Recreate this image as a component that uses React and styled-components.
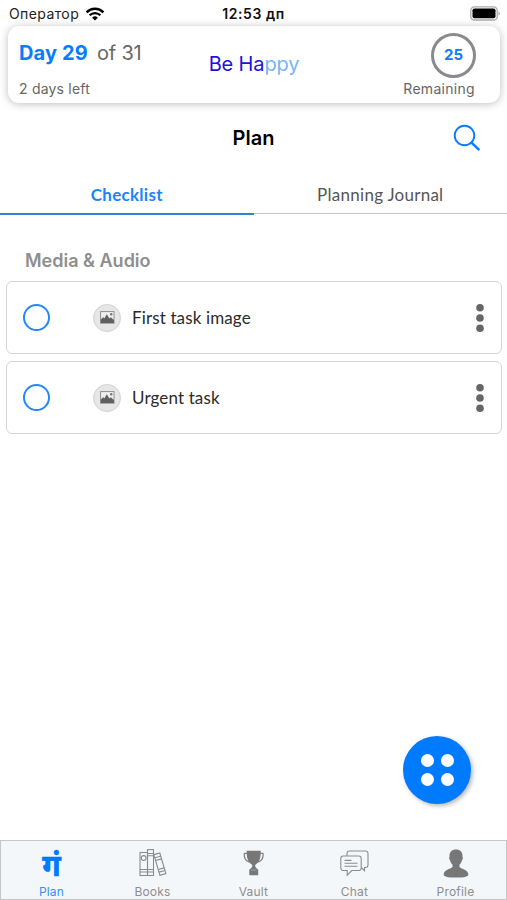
import React from "react";
import styled, { createGlobalStyle } from "styled-components";

const tasks = ["First task image", "Urgent task"];

function WifiIcon() {
  return (
    <svg width="20" height="14" viewBox="0 0 20 14" fill="none" stroke="#000">
      <path d="M1.6 5.3a12 12 0 0 1 16.8 0" strokeWidth="2.5" />
      <path d="M4.6 8.3a7.7 7.7 0 0 1 10.8 0" strokeWidth="2.3" />
      <path d="M10 13.6 7.1 10.7a4.1 4.1 0 0 1 5.8 0z" fill="#000" stroke="none" />
    </svg>
  );
}

function BatteryIcon() {
  return (
    <svg width="31" height="15" viewBox="0 0 31 15">
      <rect x="0.8" y="0.8" width="26.4" height="13.2" rx="3.6" fill="#fff" stroke="#aaa" strokeWidth="1.3" />
      <rect x="2.5" y="2.5" width="23" height="9.8" rx="1.8" fill="#000" />
      <path d="M28.5 5.2a2.6 2.6 0 0 1 0 4.6z" fill="#aaa" />
    </svg>
  );
}

function SearchIcon() {
  return (
    <svg width="28" height="28" viewBox="0 0 28 28" fill="none" stroke="#0a7cff" strokeLinecap="round">
      <circle cx="11.5" cy="11.5" r="9.8" strokeWidth="1.9" />
      <path d="M18.8 18.8 25.6 25.4" strokeWidth="2.5" />
    </svg>
  );
}

function PictureIcon() {
  return (
    <svg width="15" height="13" viewBox="0 0 15 13">
      <rect x="0.6" y="0.6" width="13.4" height="11.6" fill="#eee" stroke="#888" strokeWidth="0.9" />
      <path d="M0.8 12V8.400l2.400-2.200 1.300 1 2.300-3.900 2.600 4.200 1.300-1.200 3.200 2.600V12z" fill="#606060" />
      <circle cx="11.2" cy="3.300" r="1.200" fill="#777" />
    </svg>
  );
}

function DotsIcon() {
  return (
    <svg width="8" height="30" viewBox="0 0 8 30" fill="#666">
      <circle cx="4" cy="4.7" r="3.8" />
      <circle cx="4" cy="15" r="3.8" />
      <circle cx="4" cy="25.3" r="3.8" />
    </svg>
  );
}

function BooksIcon() {
  return (
    <svg width="28" height="28" viewBox="0 0 28 28" fill="none" stroke="#8c8c8c" strokeWidth="1.1">
      <rect x="1" y="3.5" width="7.5" height="23" />
      <circle cx="4.7" cy="9" r="2.4" />
      <path d="M1 20.5h7.5M1 23h7.5" />
      <rect x="8.5" y="0.6" width="6" height="25.9" />
      <path d="M8.5 4.5h6M8.5 6.7h6M8.5 20.5h6M8.5 23h6" />
      <path d="m14.9 5.6 5.9-1.6 6.1 20.6-6 1.7z" />
      <path d="m15.8 8.8 5.9-1.6M16.6 11.5l5.9-1.6M19.2 20.5l5.9-1.6M20 23.1l5.9-1.6" />
    </svg>
  );
}

function TrophyIcon() {
  return (
    <svg width="22" height="28" viewBox="0 0 22 28">
      <path
        d="M4 4.4H1.4c-.5 4 .9 7.4 5 8.8M17.2 4.4h2.8c.5 4-1 7.4-5.2 8.8"
        fill="none"
        stroke="#858585"
        strokeWidth="1.3"
      />
      <path
        d="M3.7 1.7h14v2.2c0 5-1.5 9.2-5 11.5-.8.6-.7 1.5-.3 2.3.6 1.2 1.6 2 2.8 2.7v5.9H6.3v-5.9c1.2-.7 2.2-1.5 2.8-2.7.4-.8.4-1.7-.4-2.3C5.2 13.1 3.7 8.9 3.7 3.900z"
        fill="#777"
      />
      <path d="M8 21h5.5" stroke="#aaa" strokeWidth="0.8" />
    </svg>
  );
}

function ChatIcon() {
  return (
    <svg width="29" height="27" viewBox="0 0 29 27" fill="none" stroke="#8c8c8c" strokeWidth="1.1">
      <path d="M7 6V3.5a2.5 2.5 0 0 1 2.5-2.5h16a2.5 2.5 0 0 1 2.5 2.5v11.500a2.5 2.5 0 0 1-2.5 2.5h-1v3.200l-3.300-3.200" />
      <path d="M3.2 6h15.600a2.400 2.400 0 0 1 2.400 2.400v9.700a2.400 2.400 0 0 1-2.400 2.400h-7l-4.600 4.600v-4.600h-4a2.400 2.400 0 0 1-2.400-2.400v-9.700A2.400 2.400 0 0 1 3.200 6z" />
      <path d="M4.500 10.400h7M4.500 13.300h13M4.500 16.200h13" />
    </svg>
  );
}

function ProfileIcon() {
  return (
    <svg width="26" height="29" viewBox="0 0 26 29" fill="#777">
      <path d="M13 .5c4.2 0 6.500 2.500 6.500 6.400 0 1.100.5 1.500.3 2.700-.2 1-.8 1.400-1 2.300-.4 1.500-1.300 2.700-2.300 3.700v2.300c1 1.700 8.300 2.600 8.800 7 .2 2.600-3.200 3.600-12.300 3.600S.5 27.500.7 24.900c.5-4.400 7.800-5.300 8.800-7v-2.300c-1-1-1.900-2.200-2.300-3.700-.2-.9-.8-1.300-1-2.300-.2-1.200.3-1.600.3-2.700C6.500 3 8.800.5 13 .5z" />
    </svg>
  );
}

function App() {
  return (
    <>
      <GlobalStyle />
      <Screen>
        <StatusBar>
          <Operator>
            <span>Оператор</span>
            <WifiIcon />
          </Operator>
          <Clock>12:53 дп</Clock>
          <BatteryIcon />
        </StatusBar>

        <DayCard>
          <DayInfo>
            <DayTitle>
              <strong>Day 29</strong>
              <span>of 31</span>
            </DayTitle>
            <Caption $spacing="0.2px">2 days left</Caption>
          </DayInfo>
          <Mood>
            Be Ha<span>ppy</span>
          </Mood>
          <Remaining>
            <Ring>25</Ring>
            <Caption $spacing="0.3px">Remaining</Caption>
          </Remaining>
        </DayCard>

        <Header>
          <h1>Plan</h1>
          <SearchButton aria-label="Search">
            <SearchIcon />
          </SearchButton>
        </Header>

        <Tabs>
          <Tab $active>Checklist</Tab>
          <Tab>Planning Journal</Tab>
        </Tabs>

        <Content>
          <SectionTitle>Media &amp; Audio</SectionTitle>
          {tasks.map((title) => (
            <TaskRow key={title}>
              <Check aria-label="Done" />
              <Thumb>
                <PictureIcon />
              </Thumb>
              <TaskTitle>{title}</TaskTitle>
              <DotsIcon />
            </TaskRow>
          ))}
        </Content>

        <Fab aria-label="Menu">
          <i />
          <i />
          <i />
          <i />
        </Fab>

        <TabBar>
          <TabItem $active>
            <TabIcon>
              <Logo>गं</Logo>
            </TabIcon>
            Plan
          </TabItem>
          <TabItem>
            <TabIcon>
              <BooksIcon />
            </TabIcon>
            Books
          </TabItem>
          <TabItem>
            <TabIcon>
              <TrophyIcon />
            </TabIcon>
            Vault
          </TabItem>
          <TabItem>
            <TabIcon>
              <ChatIcon />
            </TabIcon>
            Chat
          </TabItem>
          <TabItem>
            <TabIcon>
              <ProfileIcon />
            </TabIcon>
            Profile
          </TabItem>
        </TabBar>
      </Screen>
    </>
  );
}

export default App;

/* --------------- GLOBAL ---------------- */

const GlobalStyle = createGlobalStyle`
  * {
    box-sizing: border-box;
  }

  body {
    margin: 0;
    background: #fff;
    font-family: Inter, "Liberation Sans", sans-serif;
  }

  button {
    padding: 0;
    border: 0;
    background: none;
  }

  svg {
    display: block;
    flex: none;
  }
`;

const Screen = styled.div`
  position: relative;
  display: flex;
  flex-direction: column;
  width: 100%;
  height: 900px;
  overflow: hidden;
  white-space: nowrap;
`;

/* --------------- STATUS BAR ---------------- */

const StatusBar = styled.div`
  display: grid;
  grid-template-columns: 1fr auto 1fr;
  align-items: center;
  height: 26px;
  padding: 1px 6px 0 9px;
  font-size: 14px;
  line-height: 18px;

  > svg {
    justify-self: end;
  }
`;

const Operator = styled.div`
  display: flex;
  align-items: center;
  gap: 6px;
  letter-spacing: 0.4px;
  color: #222;
`;

const Clock = styled.div`
  margin-right: 3px;
  font-weight: 600;
  letter-spacing: 0.55px;
  color: #111;
`;

/* --------------- DAY CARD ---------------- */

const DayCard = styled.section`
  display: grid;
  grid-template-columns: 1fr auto 1fr;
  height: 77px;
  margin: 0 7px 0 8px;
  padding: 0 24px 0 11px;
  border-radius: 11px;
  background: #fff;
  box-shadow: 0 1px 9px rgba(0, 0, 0, 0.26);
`;

const DayInfo = styled.div`
  padding-top: 15px;
`;

const DayTitle = styled.div`
  display: flex;
  gap: 9px;
  height: 40px;
  font-size: 20px;
  line-height: 25px;
  color: #666;

  strong {
    font-weight: 700;
    letter-spacing: 0.15px;
    color: #0a7cff;
  }

  span {
    letter-spacing: -0.2px;
  }
`;

const Caption = styled.div`
  font-size: 14px;
  line-height: 16px;
  letter-spacing: ${(props) => props.$spacing};
  color: #666;
`;

const Mood = styled.div`
  padding: 26px 0 0 13px;
  font-size: 20px;
  line-height: 25px;
  letter-spacing: -0.15px;
  color: #2310e0;

  span {
    color: #78b4fa;
  }
`;

const Remaining = styled.div`
  display: flex;
  flex-direction: column;
  align-items: flex-end;
  padding: 7px 1px 0 0;
`;

const Ring = styled.div`
  display: flex;
  justify-content: center;
  align-items: center;
  width: 45px;
  height: 45px;
  margin: 0 -1px 3px 0;
  padding-bottom: 2px;
  border: 3px solid #8a8a8e;
  border-radius: 50%;
  font-size: 15px;
  font-weight: 700;
  color: #0a7cff;
`;

/* --------------- HEADER ---------------- */

const Header = styled.header`
  display: grid;
  grid-template-columns: 1fr auto 1fr;
  align-items: center;
  height: 70px;
  padding: 0 26px;

  h1 {
    grid-column: 2;
    margin: 0;
    font-size: 20px;
    font-weight: 600;
    line-height: 26px;
    color: #000;
  }
`;

const SearchButton = styled.button`
  justify-self: end;
`;

const Tabs = styled.nav`
  display: flex;
  height: 42px;
`;

const Tab = styled.div`
  flex: 1;
  height: ${(props) => (props.$active ? "42px" : "41px")};
  border-bottom: ${(props) => (props.$active ? "2px solid #2f82dc" : "1px solid #c4c4c4")};
  font-family: Lato, "Open Sans", sans-serif;
  font-size: 17px;
  font-weight: ${(props) => (props.$active ? 700 : 400)};
  line-height: 44px;
  letter-spacing: 0.27px;
  text-align: center;
  color: ${(props) => (props.$active ? "#1a84fa" : "#555")};
`;

/* --------------- TASKS ---------------- */

const Content = styled.main`
  flex: 1;
  padding: 0 5px 0 6px;
`;

const SectionTitle = styled.h2`
  height: 66px;
  margin: 0;
  padding: 34px 0 0 19px;
  font-size: 18px;
  font-weight: 600;
  line-height: 24px;
  color: #8e8e8e;
`;

const TaskRow = styled.div`
  display: flex;
  align-items: center;
  height: 73px;
  margin-bottom: 7px;
  padding: 0 17px 0 16px;
  border: 1px solid #d6d6d6;
  border-radius: 6px;
`;

const Check = styled.button`
  width: 27px;
  height: 27px;
  border: 2px solid #2088f8;
  border-radius: 50%;
`;

const Thumb = styled.div`
  display: flex;
  justify-content: center;
  align-items: center;
  width: 28px;
  height: 28px;
  margin-left: 43px;
  border: 1px solid #d2d2d2;
  border-radius: 50%;
  background: #e6e6e6;
`;

const TaskTitle = styled.div`
  flex: 1;
  margin-left: 11px;
  font-family: Lato, "Open Sans", sans-serif;
  font-size: 17px;
  line-height: 22px;
  letter-spacing: 0.13px;
  color: #2b2b2b;
`;

const Fab = styled.button`
  position: absolute;
  right: 36px;
  bottom: 96px;
  display: grid;
  grid-template-columns: 13px 13px;
  gap: 6px 7px;
  place-content: center;
  width: 68px;
  height: 68px;
  border-radius: 50%;
  background: #007aff;
  box-shadow: 2px 2px 4px rgba(0, 0, 0, 0.28);

  i {
    width: 13px;
    height: 13px;
    border-radius: 50%;
    background: #fff;
  }
`;

/* --------------- TAB BAR ---------------- */

const TabBar = styled.footer`
  display: flex;
  height: 60px;
  border: 1px solid #c4c6c8;
  background: #f4f7f9;
`;

const TabItem = styled.div`
  flex: 1;
  display: flex;
  flex-direction: column;
  align-items: center;
  font-size: 12px;
  line-height: 14px;
  letter-spacing: 0.2px;
  color: ${(props) => (props.$active ? "#3391fb" : "#8e8e8e")};
`;

const TabIcon = styled.div`
  display: flex;
  justify-content: center;
  align-items: center;
  height: 44px;
`;

const Logo = styled.span`
  padding-top: 4px;
  font-family: "Noto Sans", sans-serif;
  font-size: 30px;
  font-weight: 700;
  line-height: 44px;
  color: #007aff;
  -webkit-text-stroke: 0.6px #007aff;
`;
